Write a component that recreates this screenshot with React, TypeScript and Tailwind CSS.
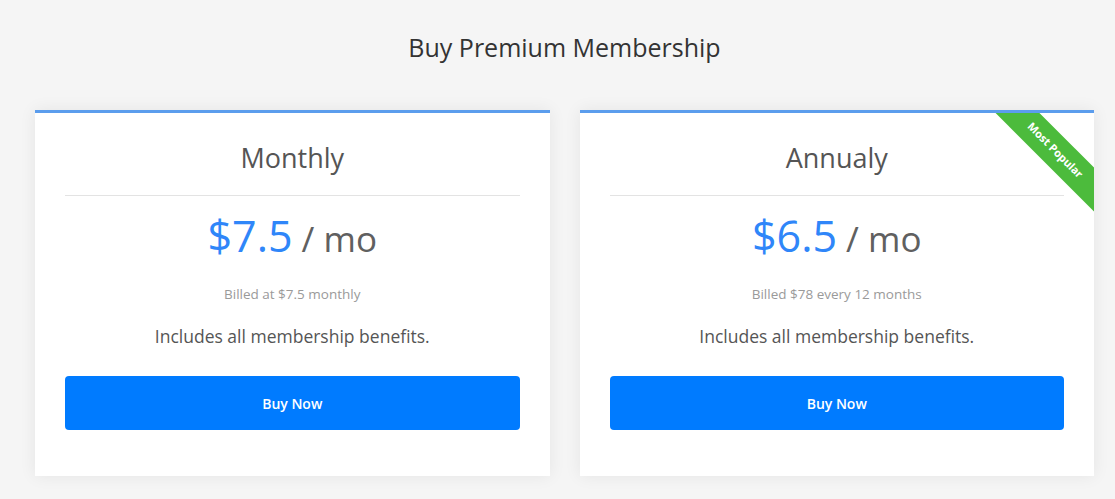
import React from "react";

const font = { fontFamily: "'Open Sans', Lato, 'Liberation Sans', sans-serif" };

function Card({ title, price, billed, popular }: { title: string; price: string; billed: string; popular?: boolean }) {
  return (
    <div className="relative flex-1 overflow-hidden bg-white border-t-[3px] border-[#5b9ded] shadow-[0_0_16px_rgba(0,0,0,0.07)] px-[30px] pt-[27px] pb-[46px] text-center">
      {popular && (
        <div className="absolute top-[22px] right-[-36px] w-[150px] h-[31px] rotate-45 bg-[#4cbb3c] flex items-center justify-center text-white text-[11px] font-bold">
          Most Popular
        </div>
      )}
      <div className="text-[27px] leading-[36px] text-[#555]">{title}</div>
      <div className="mt-[19px] h-px bg-[#e3e3e3]" />
      <div className="mt-[15px] h-[50px] flex items-baseline justify-center">
        <span className="text-[43px] leading-[50px] text-[#2f86f9]">{price}</span>
        <span className="text-[35px] leading-[50px] text-[#606060] whitespace-pre"> / mo</span>
      </div>
      <div className="mt-[23px] text-[13.5px] leading-[20px] text-[#9a9a9a]">{billed}</div>
      <div className="mt-[20px] text-[17.5px] leading-[24px] text-[#555]">Includes all membership benefits.</div>
      <button className="mt-[28px] w-full h-[54px] rounded-[4px] bg-[#007bff] text-white text-[14px] font-semibold">
        Buy Now
      </button>
    </div>
  );
}

export default function App() {
  return (
    <div style={font} className="min-h-[499px] bg-[#f5f5f5] pt-[31px] pl-[35px] pr-[21px]">
      <h1 className="text-center text-[25px] leading-[32px] text-[#333]">Buy Premium Membership</h1>
      <div className="mt-[47px] flex gap-[30px]">
        <Card title="Monthly" price="$7.5" billed="Billed at $7.5 monthly" />
        <Card title="Annualy" price="$6.5" billed="Billed $78 every 12 months" popular />
      </div>
    </div>
  );
}
